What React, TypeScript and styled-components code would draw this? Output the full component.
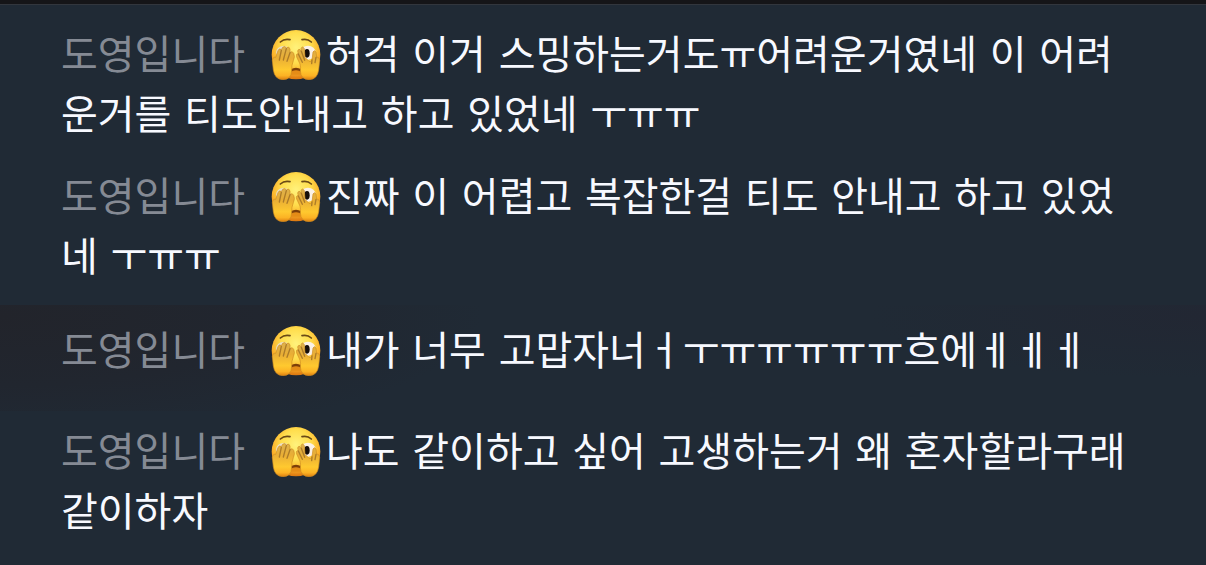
import React from 'react';
import styled, { createGlobalStyle } from 'styled-components';

const GlobalStyle = createGlobalStyle`
  * {
    box-sizing: border-box;
  }

  body {
    margin: 0;
    min-height: 100vh;
    background: #202a35;
    font-family: 'DejaVu Sans', 'Noto Sans CJK KR', sans-serif;
  }
`;

const ChatPanel = styled.main`
  border-top: 4px solid #151518;
  box-shadow: inset 0 1px 0 #32363d;
  padding: 10px 0 12px;
`;

const MessageList = styled.ul`
  list-style: none;
  margin: 0;
  padding: 0;
`;

const MessageRow = styled.li<{ $highlighted?: boolean }>`
  padding: ${({ $highlighted }) => ($highlighted ? '16px 60px 30px 61px' : '11px 60px 11px 61px')};
  margin-top: ${({ $highlighted }) => ($highlighted ? '7px' : '0')};
  background: ${({ $highlighted }) =>
    $highlighted
      ? 'radial-gradient(ellipse 40% 120% at 0% 10%, #22242b 0%, #21262f 55%, rgba(32, 42, 53, 0) 100%), radial-gradient(ellipse 28% 60% at 100% 10%, #222733 0%, rgba(32, 42, 53, 0) 100%)'
      : 'transparent'};
  color: #f7f9ff;
  font-size: 40px;
  line-height: 60px;
`;

const Author = styled.span`
  display: inline-block;
  margin-right: 26px;
  color: #858a94;
  font-weight: 400;
`;

const Face = styled.svg`
  width: 50px;
  height: 50px;
  margin-right: 5px;
  vertical-align: -11px;
`;

function PeekingFace() {
  return (
    <Face viewBox="0 0 148 150" role="img" aria-label="손가락 사이로 보는 얼굴">
      <defs>
        <radialGradient id="skin" cx="50%" cy="36%" r="62%">
          <stop offset="0" stopColor="#fff27c" />
          <stop offset="0.5" stopColor="#ffdd4c" />
          <stop offset="0.8" stopColor="#fbb02a" />
          <stop offset="1" stopColor="#df7c12" />
        </radialGradient>
        <linearGradient id="hand" x1="0" y1="0" x2="0" y2="1">
          <stop offset="0" stopColor="#dcb14c" />
          <stop offset="0.35" stopColor="#e9ae35" />
          <stop offset="0.7" stopColor="#ffc92f" />
          <stop offset="0.88" stopColor="#fcb224" />
          <stop offset="1" stopColor="#dd7f10" />
        </linearGradient>
      </defs>
      <ellipse cx="74" cy="74" rx="73" ry="74" fill="url(#skin)" />
      <path d="M27 36 Q39 25 56 29 M92 29 Q108 25 120 36" fill="none" stroke="#6b4a16" strokeWidth="5" strokeLinecap="round" />
      <ellipse cx="36" cy="68" rx="22" ry="20" fill="#eadfca" />
      <ellipse cx="110" cy="68" rx="23" ry="21" fill="#fbf1e6" />
      <ellipse cx="107" cy="70" rx="8" ry="13" fill="#160e0a" />
      <path d="M56 122 Q74 112 92 122 L88 134 L60 134 Z" fill="#e58c17" />
      <path d="M60 121 Q74 113 88 121" fill="none" stroke="#7d3f08" strokeWidth="7" strokeLinecap="round" />
      <path
        d="M3 92 Q4 80 13 82 L20 62 Q24 53 30 59 L34 52 Q41 46 45 54 Q53 47 56 57 L56 67 Q64 62 67 70 Q72 80 66 92 Q60 106 61 122 Q60 149 34 149 Q10 148 6 120 Z"
        fill="url(#hand)"
        stroke="#ce8c20"
        strokeWidth="2"
      />
      <path
        d="M145 92 Q144 80 136 82 L134 66 Q129 58 125 66 L122 90 Q119 96 113 94 L101 82 L99 56 Q93 46 89 56 L90 63 Q82 53 79 63 L81 71 Q73 70 76 81 L86 102 Q89 112 87 122 Q88 149 114 149 Q138 148 142 120 Z"
        fill="url(#hand)"
        stroke="#ce8c20"
        strokeWidth="2"
      />
      <path
        d="M30 61 L24 90 M45 56 L36 90 M56 68 L47 94 M90 64 L100 91 M81 72 L93 97 M122 90 L121 101 M134 82 L131 98"
        fill="none"
        stroke="#ac7b28"
        strokeWidth="4"
        strokeLinecap="round"
      />
    </Face>
  );
}

type Message = { id: number; text: string; highlighted?: boolean };

const author = '도영입니다';

const messages: Message[] = [
  { id: 1, text: '허걱 이거 스밍하는거도ㅠ어려운거였네 이 어려운거를 티도안내고 하고 있었네 ㅜㅠㅠ' },
  { id: 2, text: '진짜 이 어렵고 복잡한걸 티도 안내고 하고 있었네 ㅜㅠㅠ' },
  { id: 3, text: '내가 너무 고맙자너ㅓㅜㅠㅠㅠㅠㅠ흐에ㅔㅔㅔ', highlighted: true },
  { id: 4, text: '나도 같이하고 싶어 고생하는거 왜 혼자할라구래 같이하자' },
];

export default function App() {
  return (
    <>
      <GlobalStyle />
      <ChatPanel lang="ko">
        <MessageList>
          {messages.map((message) => (
            <MessageRow key={message.id} $highlighted={message.highlighted}>
              <Author>{author}</Author>
              <PeekingFace />
              {message.text}
            </MessageRow>
          ))}
        </MessageList>
      </ChatPanel>
    </>
  );
}
